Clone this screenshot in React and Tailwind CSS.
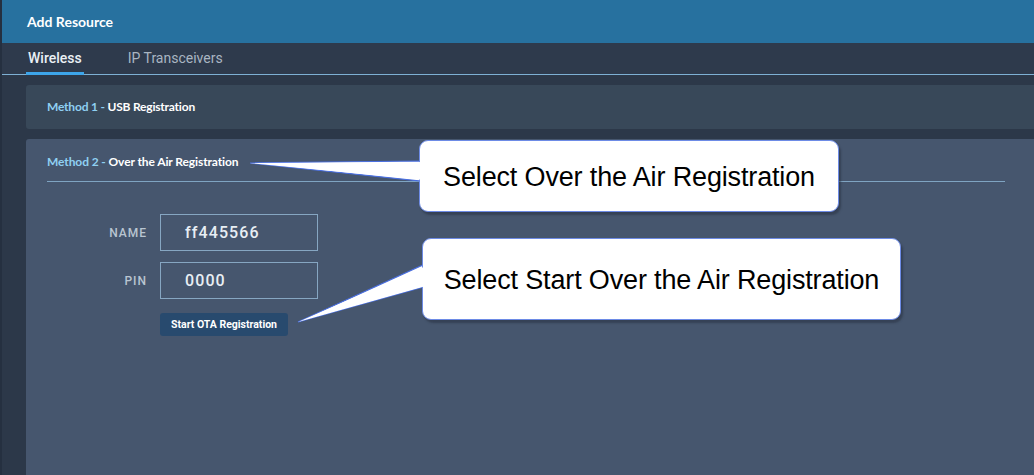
import React from 'react';

const ui = { fontFamily: 'Lato, "Noto Sans", sans-serif' };
const rb = { fontFamily: 'Roboto, "Noto Sans", sans-serif' };
const arial = { fontFamily: '"Liberation Sans", Arial, sans-serif' };

const Field = ({ label, value }) => (
  <div className="flex items-center">
    <div className="w-[113px] pr-[13px] text-right text-[12px] font-medium tracking-[1px] text-[#b9c5d1]" style={rb}>
      {label}
    </div>
    <div className="w-[158px] h-[37px] border border-[#86a6c2] flex items-center pl-[24px] text-[16px] font-medium tracking-[1.1px] text-[#e8eef4]" style={rb}>
      {value}
    </div>
  </div>
);

// white speech bubble with a pointer running out to the left
const Callout = ({ box, tip, base, text }) => (
  <>
    <svg className="absolute left-0 top-0 pointer-events-none" width="1034" height="475">
      <polygon points={`${tip[0]},${tip[1]} ${base[0]},${base[1]} ${base[0]},${base[2]}`} fill="#ffffff" stroke="#4a6fe0" strokeWidth="1.2" />
    </svg>
    <div
      className="absolute bg-white border border-[#6d8be6] rounded-[9px] shadow-[2px_3px_2px_rgba(40,50,65,0.55)] flex items-center justify-center pt-[3px] text-[27px] tracking-[-0.15px] text-black"
      style={{ ...arial, left: box[0], top: box[1], width: box[2], height: box[3] }}
    >
      {text}
    </div>
    <svg className="absolute left-0 top-0 pointer-events-none" width="1034" height="475">
      <polygon points={`${tip[0]},${tip[1]} ${base[0] + 3},${base[1] + 1} ${base[0] + 3},${base[2] - 1}`} fill="#ffffff" />
    </svg>
  </>
);

export default function App() {
  return (
    <div className="relative w-[1034px] h-[475px] overflow-hidden bg-[#2c3849] border-l-2 border-[#253040]" style={ui}>
      {/* Header */}
      <div className="h-[43px] bg-[#27719f] flex items-center pl-[25px] text-[14px] font-bold text-white">
        Add Resource
      </div>

      {/* Tabs */}
      <div className="h-[32px] bg-[#2e3a4c] border-b border-[#7eb0d4] flex items-end pl-[24px] gap-[44px]" style={rb}>
        <div className="relative h-full flex items-center px-[2px] text-[14px] font-medium text-[#eaf0f5]">
          Wireless
          <span className="absolute left-0 right-0 -bottom-[1px] h-[3px] bg-[#3da5ea]" />
        </div>
        <div className="h-full flex items-center text-[14px] text-[#a9b5c2]">IP Transceivers</div>
      </div>

      <div className="pl-[24px] pt-[10px] flex flex-col gap-[10px]">
        {/* Method 1 */}
        <div className="h-[44px] bg-[#384859] rounded-l-[3px] flex items-center pl-[21px] text-[12px] font-bold tracking-[-0.2px]">
          <span className="text-[#8fd0f2]">Method 1 -&nbsp;</span>
          <span className="text-white">USB Registration</span>
        </div>

        {/* Method 2 */}
        <div className="h-[340px] bg-[#46566e] rounded-l-[3px] pl-[21px] pr-[29px]">
          <div className="h-[43px] border-b border-[#7fa4c2] flex items-center pt-[4px] text-[12px] font-bold tracking-[-0.1px]">
            <span className="text-[#8fd0f2]">Method 2 -&nbsp;</span>
            <span className="text-white">Over the Air Registration</span>
          </div>
          <div className="pt-[32px] flex flex-col gap-[11px]">
            <Field label="NAME" value="ff445566" />
            <Field label="PIN" value="0000" />
          </div>
          <div className="pl-[113px] pt-[11px]">
            <button className="h-[23px] w-[128px] bg-[#284a6e] rounded-[3px] text-[10.5px] font-bold text-white" style={rb}>
              Start OTA Registration
            </button>
          </div>
        </div>
      </div>

      <Callout box={[417, 140, 420, 72]} tip={[248, 163]} base={[419, 161, 181]} text="Select Over the Air Registration" />
      <Callout box={[420, 238, 479, 82]} tip={[296, 322]} base={[421, 265, 287]} text="Select Start Over the Air Registration" />
    </div>
  );
}
